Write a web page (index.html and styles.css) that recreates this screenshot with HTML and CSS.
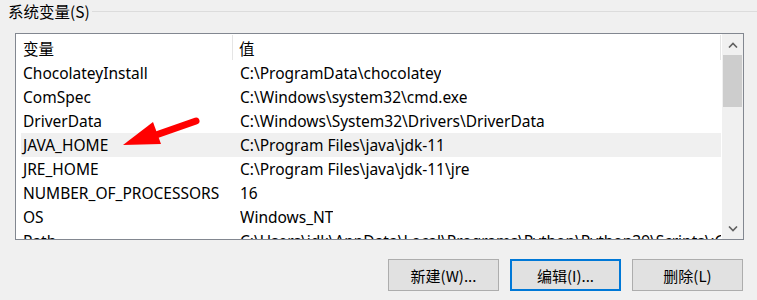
FILE: index.html
```html
<!DOCTYPE html>
<html lang="zh-CN">
<head>
<meta charset="utf-8">
<link rel="stylesheet" href="styles.css">
</head>
<body>
<div class="group-title"><span class="title-text">系统变量(S)</span><span class="title-line"></span></div>
<div class="listbox">
  <div class="list-content">
    <div class="header">
      <div class="hcol hcol-name">变量</div>
      <div class="hcol hcol-value">值</div>
    </div>
    <div class="rows">
      <div class="row"><span class="c-name">ChocolateyInstall</span><span class="c-value">C:\ProgramData\chocolatey</span></div>
      <div class="row"><span class="c-name">ComSpec</span><span class="c-value">C:\Windows\system32\cmd.exe</span></div>
      <div class="row"><span class="c-name">DriverData</span><span class="c-value">C:\Windows\System32\Drivers\DriverData</span></div>
      <div class="row selected"><span class="c-name">JAVA_HOME</span><span class="c-value">C:\Program Files\java\jdk-11</span></div>
      <div class="row"><span class="c-name">JRE_HOME</span><span class="c-value">C:\Program Files\java\jdk-11\jre</span></div>
      <div class="row"><span class="c-name">NUMBER_OF_PROCESSORS</span><span class="c-value">16</span></div>
      <div class="row"><span class="c-name">OS</span><span class="c-value">Windows_NT</span></div>
      <div class="row"><span class="c-name">Path</span><span class="c-value">C:\Users\jdk\AppData\Local\Programs\Python\Python39\Scripts\;C:\Users</span></div>
    </div>
  </div>
  <div class="scrollbar">
    <div class="sb-btn">
      <svg width="10" height="6" viewBox="0 0 10 6"><path d="M1 5.5 L5 1.5 L9 5.5" fill="none" stroke="#606060" stroke-width="1.6"/></svg>
    </div>
    <div class="sb-track"><div class="sb-thumb"></div></div>
    <div class="sb-btn">
      <svg width="10" height="6" viewBox="0 0 10 6"><path d="M1 0.5 L5 4.5 L9 0.5" fill="none" stroke="#606060" stroke-width="1.6"/></svg>
    </div>
  </div>
  <svg class="arrow" width="90" height="40" viewBox="0 0 90 40">
    <line x1="80" y1="10" x2="40" y2="24" stroke="#ff0000" stroke-width="7" stroke-linecap="round"/>
    <polygon points="7,34 37,11 45,33" fill="#ff0000"/>
  </svg>
</div>
<div class="buttons">
  <button class="btn">新建(W)...</button>
  <button class="btn focused">编辑(I)...</button>
  <button class="btn">删除(L)</button>
</div>
</body>
</html>
```

FILE: styles.css
```css
html, body {
  margin: 0;
  padding: 0;
}
body {
  background: #f0f0f0;
  width: 757px;
  height: 300px;
  overflow: hidden;
  font-family: "Noto Sans", "Noto Sans CJK SC", sans-serif;
  font-size: 15.5px;
  color: #000;
}
.group-title {
  display: flex;
  align-items: center;
  height: 22px;
  margin-bottom: 11px;
}
.title-text {
  padding-left: 8px;
  padding-right: 2px;
  line-height: 22px;
  font-family: "Noto Sans CJK SC", sans-serif;
}
.title-line {
  flex: 1;
  height: 0;
  border-top: 1px solid #dcdcdc;
  margin-top: 1px;
}
.listbox {
  position: relative;
  margin-left: 15px;
  width: 727px;
  height: 205px;
  border: 1px solid #828790;
  background: #fff;
  display: flex;
  overflow: hidden;
}
.list-content {
  flex: 1;
  overflow: hidden;
}
.header {
  display: flex;
  height: 27px;
  align-items: stretch;
}
.hcol {
  display: flex;
  align-items: center;
  font-family: "Noto Sans CJK SC", sans-serif;
  border-right: 1px solid #e5e5e5;
  margin: 1px 0;
}
.hcol-name {
  width: 209px;
  padding-left: 7px;
}
.hcol-value {
  flex: 1;
  padding-left: 6px;
}
.rows {
  padding-left: 5px;
}
.row {
  display: flex;
  align-items: center;
  height: 24px;
  white-space: nowrap;
}
.row.selected {
  background: #f0f0f0;
}
.c-name {
  width: 217px;
  padding-left: 2px;
  flex-shrink: 0;
}
.c-value {
  overflow: hidden;
}
.scrollbar {
  width: 21px;
  background: #f0f0f0;
  display: flex;
  flex-direction: column;
  border-left: 1px solid #ffffff;
}
.sb-btn {
  height: 21px;
  display: flex;
  align-items: center;
  justify-content: center;
}
.sb-track {
  flex: 1;
}
.sb-thumb {
  margin: 0 1px;
  height: 52px;
  background: #cdcdcd;
}
.arrow {
  position: absolute;
  left: 100px;
  top: 77px;
}
.buttons {
  display: flex;
  justify-content: flex-end;
  gap: 11px;
  margin-top: 19px;
  padding-right: 14px;
}
.btn {
  width: 111px;
  height: 32px;
  background: #e1e1e1;
  border: 1px solid #adadad;
  font-family: "Noto Sans CJK SC", sans-serif;
  font-size: 15px;
  color: #000;
  padding: 0;
}
.btn.focused {
  border: 2px solid #0078d7;
}
```
